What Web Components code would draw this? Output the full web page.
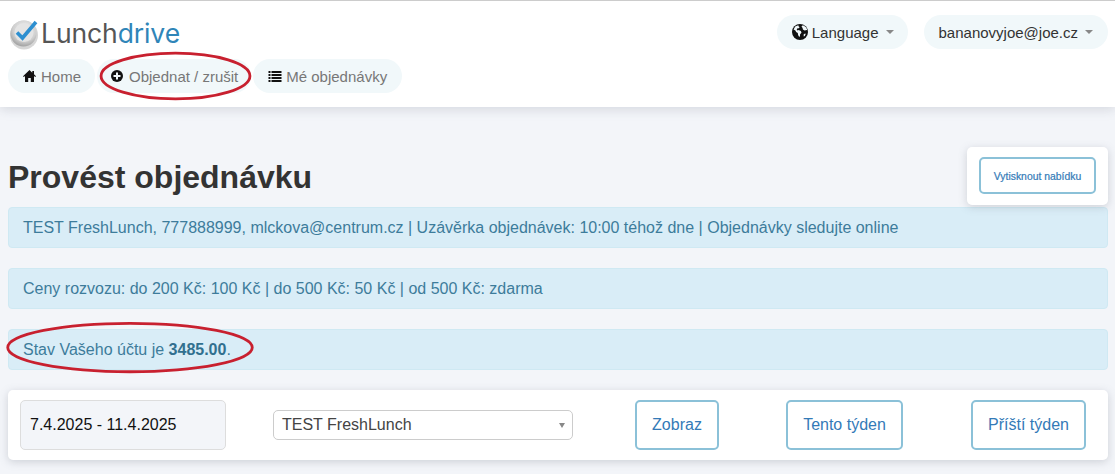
<!DOCTYPE html>
<html lang="cs"><head><meta charset="utf-8"><title>Lunchdrive</title>
<style>
html,body{margin:0;padding:0}
body{width:1115px;height:474px;overflow:hidden;background:#f3f5f9;font-family:"Liberation Sans",Arial,sans-serif;color:#333}
</style></head><body>
<ld-header>
  <ld-pill slot="right" kind="dark" caret style="padding-right:14px"><svg slot="icon" style="margin-right:4px" width="16" height="16" viewBox="0 0 16 16"><circle cx="8" cy="8" r="8" fill="#111"/><path fill="#f1f8fa" d="M6.3 1.2 3.2 2.6 1.6 5.4l1.8 1 .7 1.6 1.7.9.3 2.2 1 1.6.8-.3.2-2.2 1.4-1.5-.6-1.6-2.3-1-1.1.4-.8-1 .8-1.2 1.4-.1.7-1.2-.9-.6zM10.3 1.6l-.8 1 1.1 1.3.3 1.5 1.7 1.1 2.3-.4.2-.9-1.4-2.2-2.2-1.4z"/><path fill="#f1f8fa" d="m11.7 10.2 1.5-.8.5.7-.9 2-1.1.5z"/></svg>Language</ld-pill>
  <ld-pill slot="right" kind="dark" caret wide>bananovyjoe@joe.cz</ld-pill>
  <ld-pill slot="nav" style="padding-right:14px"><svg slot="icon" width="13" height="12" viewBox="0 0 13 12"><path fill="#111" d="M6.5 0 0 6.2l.8.8L2 5.9V12h3.2V8h2.6v4H11V5.900L12.200 7l.8-.8-2-1.900V1H9.300v1.700z"/></svg>Home</ld-pill>
  <ld-pill slot="nav" style="padding:0 13px 0 14px"><svg slot="icon" style="margin-right:6px" width="12" height="12" viewBox="0 0 12 12"><circle cx="6" cy="6" r="6" fill="#111"/><path fill="#f1f8fa" d="M5 2.500h2V5h2.500v2H7v2.500H5V7H2.500V5H5z"/></svg>Objednat / zrušit</ld-pill>
  <ld-pill slot="nav"><svg slot="icon" style="margin-right:4px" width="14" height="12" viewBox="0 0 13 12"><path fill="#111" d="M0 1h2v2H0zM3 1h10v2H3zM0 4h2v2H0zM3 4h10v2H3zM0 7h2v2H0zM3 7h10v2H3zM0 10h2v2H0zM3 10h10v2H3z"/></svg>Mé objednávky</ld-pill>
</ld-header>
<ld-title>Provést objednávku</ld-title>
<ld-alert>TEST FreshLunch, 777888999, mlckova@centrum.cz | Uzávěrka objednávek: 10:00 téhož dne | Objednávky sledujte online</ld-alert>
<ld-alert>Ceny rozvozu: do 200 Kč: 100 Kč | do 500 Kč: 50 Kč | od 500 Kč: zdarma</ld-alert>
<ld-alert>Stav Vašeho účtu je <b>3485.00</b>.</ld-alert>
<ld-toolbar></ld-toolbar>
<ld-ellipse style="left:100px;top:52px;width:151px;height:48px"></ld-ellipse>
<ld-ellipse style="left:6px;top:322px;width:248px;height:51px"></ld-ellipse>

<script>
const def=(name,html,init)=>customElements.define(name,class extends HTMLElement{
  connectedCallback(){ if(this.shadowRoot)return; this.attachShadow({mode:'open'}).innerHTML=html; init&&init(this); }
});
def('ld-logo',`<style>
:host{display:flex;align-items:center;height:36px}
svg{display:block;margin-right:0}
.t{font:400 26.500px/36px Inter,"Liberation Sans",sans-serif;color:#555;letter-spacing:-.1px}
.d{color:#2f85b8}
</style>
<svg width="33" height="36" viewBox="0 0 33 36">
<defs><radialGradient id="g" cx=".55" cy=".35" r=".75"><stop offset="0" stop-color="#f2f2f2"/><stop offset=".6" stop-color="#cfcfcf"/><stop offset="1" stop-color="#8b8b8b"/></radialGradient></defs>
<ellipse cx="16" cy="20" rx="14" ry="14.500" fill="#bbb" opacity=".6"/>
<circle cx="15.500" cy="18.500" r="13" fill="url(#g)"/>
<circle cx="16" cy="17.500" r="9.500" fill="#e4e4e4"/>
<path d="M9 17.500l5.500 5.500L28 7" fill="none" stroke="#2d8fd0" stroke-width="3.600"/>
</svg><span class="t">Lunch<span class="d">drive</span></span>`);
def('ld-header',`<style>
:host{display:block;height:106px;background:#fff;border-top:1px solid #ccc;box-shadow:0 3px 10px rgba(120,125,140,.22);position:relative}
.top{display:flex;justify-content:space-between;padding:14px 7px 0 8px;height:34px}
.r{display:flex;gap:16px}
.n{display:flex;gap:2px;padding:10px 0 0 8px}
</style>
<div class="top"><ld-logo></ld-logo><div class="r"><slot name="right"></slot></div></div>
<div class="n"><slot name="nav"></slot></div>`);
def('ld-pill',`<style>
:host{display:inline-flex;align-items:center;height:34px;padding:0 15px;background:#f1f8fa;border-radius:17px;font-size:15px;color:#777;white-space:nowrap}
:host([kind=dark]){color:#333}
::slotted(svg){margin-right:5px;display:block}
.c{display:none;width:0;height:0;margin-left:7px;border:4px solid transparent;border-top-color:#888;border-bottom:0}
:host([caret]) .c{display:block}
</style><slot name="icon"></slot><slot></slot><span class="c"></span>`);
def('ld-title',`<style>
:host{display:flex;justify-content:space-between;align-items:flex-start;padding:40px 7px 0 8px;height:60px}
h1{margin:10px 0 0;font:700 32px/40px "Liberation Sans",sans-serif;color:#333}
.c{width:141px;height:58px;box-sizing:border-box;padding:10px 12px;background:#fff;border-radius:5px;box-shadow:0 2px 8px rgba(120,125,140,.3)}
.b{height:37px;box-sizing:border-box;padding-top:1px;border:2px solid #8bc1d8;border-radius:5px;display:flex;align-items:center;justify-content:center;font-size:10.400px;color:#337ab7;-webkit-text-stroke:.2px #337ab7}
</style><h1><slot></slot></h1><div class="c"><div class="b">Vytisknout nabídku</div></div>`);
def('ld-alert',`<style>
:host{display:flex;align-items:center;box-sizing:border-box;height:41px;margin:0 7px 20px 8px;padding:0 14px;background:#d9edf7;border:1px solid #cfe9f3;border-radius:4px;color:#3d7c9b;font-size:16px;white-space:nowrap}
::slotted(b){color:#31708f}
</style><div><slot></slot></div>`);
def('ld-toolbar',`<style>
:host{display:grid;align-items:center;height:70px;box-sizing:border-box;margin:0 7px 0 8px;padding:10px 22px 10px 12px;background:#fff;border-radius:5px;box-shadow:0 2px 8px rgba(120,125,140,.3);grid-template-columns:206px 47px 300px 62px 84px 67px 117px 68px 115px}
.d{grid-column:1;height:50px;box-sizing:border-box;display:flex;align-items:center;padding-left:9px;background:#f3f5f9;border:1px solid #ddd;border-radius:5px;font-size:16px;color:#111}
.s{grid-column:3;height:30px;box-sizing:border-box;display:flex;align-items:center;justify-content:space-between;padding:0 7px 0 8px;border:1px solid #ccc;border-radius:5px;font-size:16px;color:#444}
.s i{border:3px solid transparent;border-top:5px solid #888;border-bottom:0}
.b{height:50px;box-sizing:border-box;display:flex;align-items:center;justify-content:center;border:2px solid #8bc1d8;border-radius:5px;font-size:16px;color:#337ab7}
</style>
<div class="d">7.4.2025 - 11.4.2025</div>
<div class="s"><span>TEST FreshLunch</span><i></i></div>
<div class="b" style="grid-column:5">Zobraz</div>
<div class="b" style="grid-column:7">Tento týden</div>
<div class="b" style="grid-column:9">Příští týden</div>`);
def('ld-ellipse',`<style>
:host{position:absolute;display:block;pointer-events:none}
svg{display:block;width:100%;height:100%;overflow:visible}
ellipse{fill:none;stroke:#c8202f;stroke-width:2.800px;vector-effect:non-scaling-stroke}
</style><svg viewBox="0 0 100 100" preserveAspectRatio="none"><ellipse cx="50" cy="50" rx="49.300" ry="47.500"/></svg>`);
</script>
</body></html>
